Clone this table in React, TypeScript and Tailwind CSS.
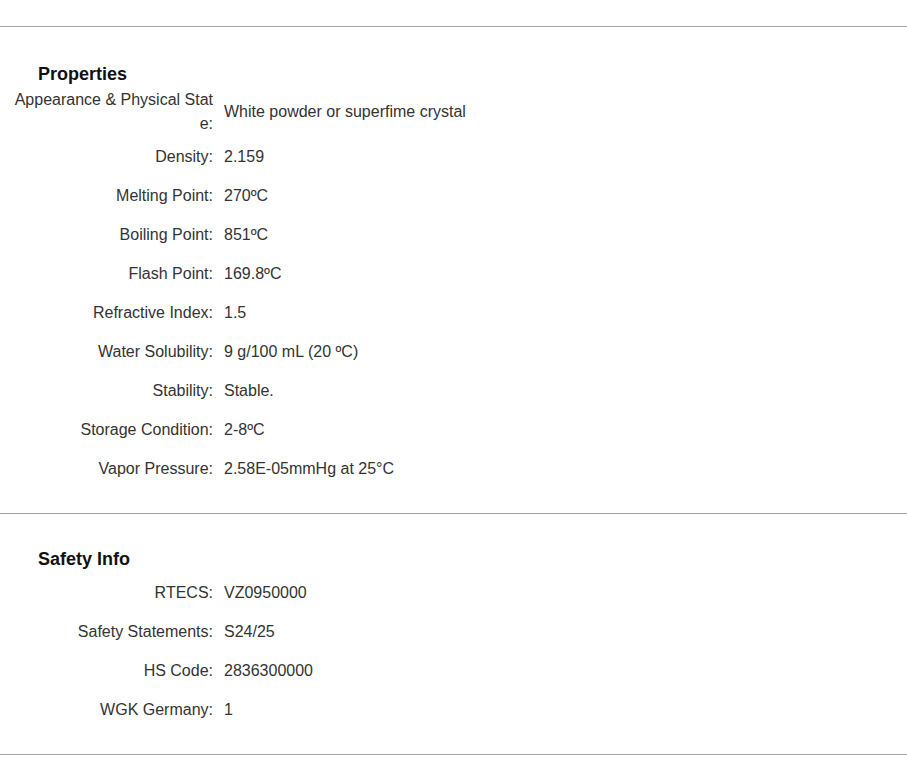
type Row = { label: string; value: string }

const properties: Row[] = [
  { label: 'Appearance & Physical State:', value: 'White powder or superfime crystal' },
  { label: 'Density:', value: '2.159' },
  { label: 'Melting Point:', value: '270ºC' },
  { label: 'Boiling Point:', value: '851ºC' },
  { label: 'Flash Point:', value: '169.8ºC' },
  { label: 'Refractive Index:', value: '1.5' },
  { label: 'Water Solubility:', value: '9 g/100 mL (20 ºC)' },
  { label: 'Stability:', value: 'Stable.' },
  { label: 'Storage Condition:', value: '2-8ºC' },
  { label: 'Vapor Pressure:', value: '2.58E-05mmHg at 25°C' },
]

const safety: Row[] = [
  { label: 'RTECS:', value: 'VZ0950000' },
  { label: 'Safety Statements:', value: 'S24/25' },
  { label: 'HS Code:', value: '2836300000' },
  { label: 'WGK Germany:', value: '1' },
]

function InfoRow({ row }: { row: Row }) {
  return (
    <div className="flex min-h-[39px] items-center py-px">
      <div className="w-[213px] shrink-0 pl-[11px] text-right leading-[24px] break-all">{row.label}</div>
      <div className="ml-[11px] leading-[24px]">{row.value}</div>
    </div>
  )
}

export default function App() {
  return (
    <div className="min-h-[782px] bg-white font-['Liberation_Sans',Arial,sans-serif] text-[16px] text-[#333]">
      <div className="h-[26px]" />
      <section className="border-t border-[#a3a3a3] pt-[37px] pb-[25px]">
        <h2 className="mb-[3px] pl-[38px] text-[18px] leading-[20px] font-bold text-[#111]">Properties</h2>
        <div>
          {properties.map((row) => (
            <InfoRow key={row.label} row={row} />
          ))}
        </div>
      </section>
      <section className="border-t border-[#a3a3a3] pt-[35px] pb-[25px]">
        <h2 className="pl-[38px] text-[18px] leading-[20px] font-bold text-[#111]">Safety Info</h2>
        <div className="mt-[4px]">
          {safety.map((row) => (
            <InfoRow key={row.label} row={row} />
          ))}
        </div>
      </section>
      <div className="border-t border-[#a3a3a3]" />
    </div>
  )
}
